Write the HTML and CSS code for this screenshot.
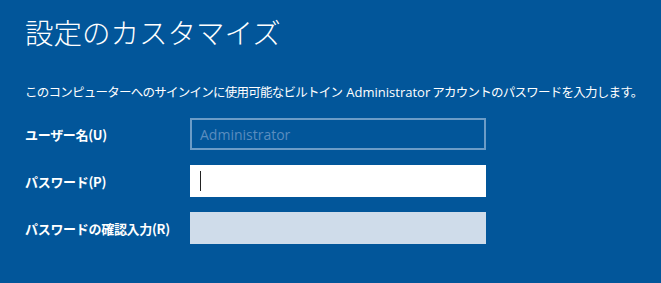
FILE: index.html
```html
<!DOCTYPE html>
<html lang="ja">
<head>
<meta charset="utf-8">
<link rel="stylesheet" href="styles.css">
</head>
<body>
<main class="page">
  <h1 class="title">設定のカスタマイズ</h1>
  <p class="desc">このコンピューターへのサインインに使用可能なビルトイン <span class="latin">Administrator</span> アカウントのパスワードを入力します。</p>
  <div class="form">
    <label class="label">ユーザー名(U)</label>
    <div class="field field-disabled"><span class="placeholder">Administrator</span></div>
    <label class="label">パスワード(P)</label>
    <div class="field field-active"><span class="caret"></span></div>
    <label class="label">パスワードの確認入力(R)</label>
    <div class="field field-pending"></div>
  </div>
</main>
</body>
</html>
```
FILE: styles.css
```css
html, body {
  margin: 0;
  padding: 0;
  background: #02569a;
  height: 100%;
}
.page {
  padding: 12px 0 0 25px;
  color: #ffffff;
  font-family: "Noto Sans CJK JP", "Noto Sans", sans-serif;
}
.title {
  margin: 0;
  font-size: 28.5px;
  font-weight: 300;
  line-height: 40px;
  letter-spacing: 0;
}
.desc {
  margin: 31px 0 0 0;
  font-size: 12.5px;
  line-height: 18px;
  font-weight: 400;
  letter-spacing: -0.75px;
  white-space: nowrap;
}
.latin {
  font-family: "Open Sans", "Noto Sans", sans-serif;
  font-size: 13px;
  letter-spacing: 0;
  margin-left: 2px;
}
.form {
  margin-top: 17px;
  display: grid;
  grid-template-columns: 165px 296px;
  row-gap: 15px;
  align-items: center;
}
.label {
  font-size: 13px;
  font-weight: 700;
  letter-spacing: -0.3px;
}
.field {
  height: 32px;
  box-sizing: border-box;
  display: flex;
  align-items: center;
  padding-left: 10px;
}
.field-disabled {
  border: 2px solid #6c9cc7;
  padding-left: 8px;
}
.placeholder {
  font-family: "Open Sans", "Noto Sans", sans-serif;
  font-size: 14px;
  color: #5a8dbf;
}
.field-active {
  background: #ffffff;
}
.caret {
  display: block;
  width: 1px;
  height: 20px;
  background: #222222;
}
.field-pending {
  background: #cfdcea;
}
```
